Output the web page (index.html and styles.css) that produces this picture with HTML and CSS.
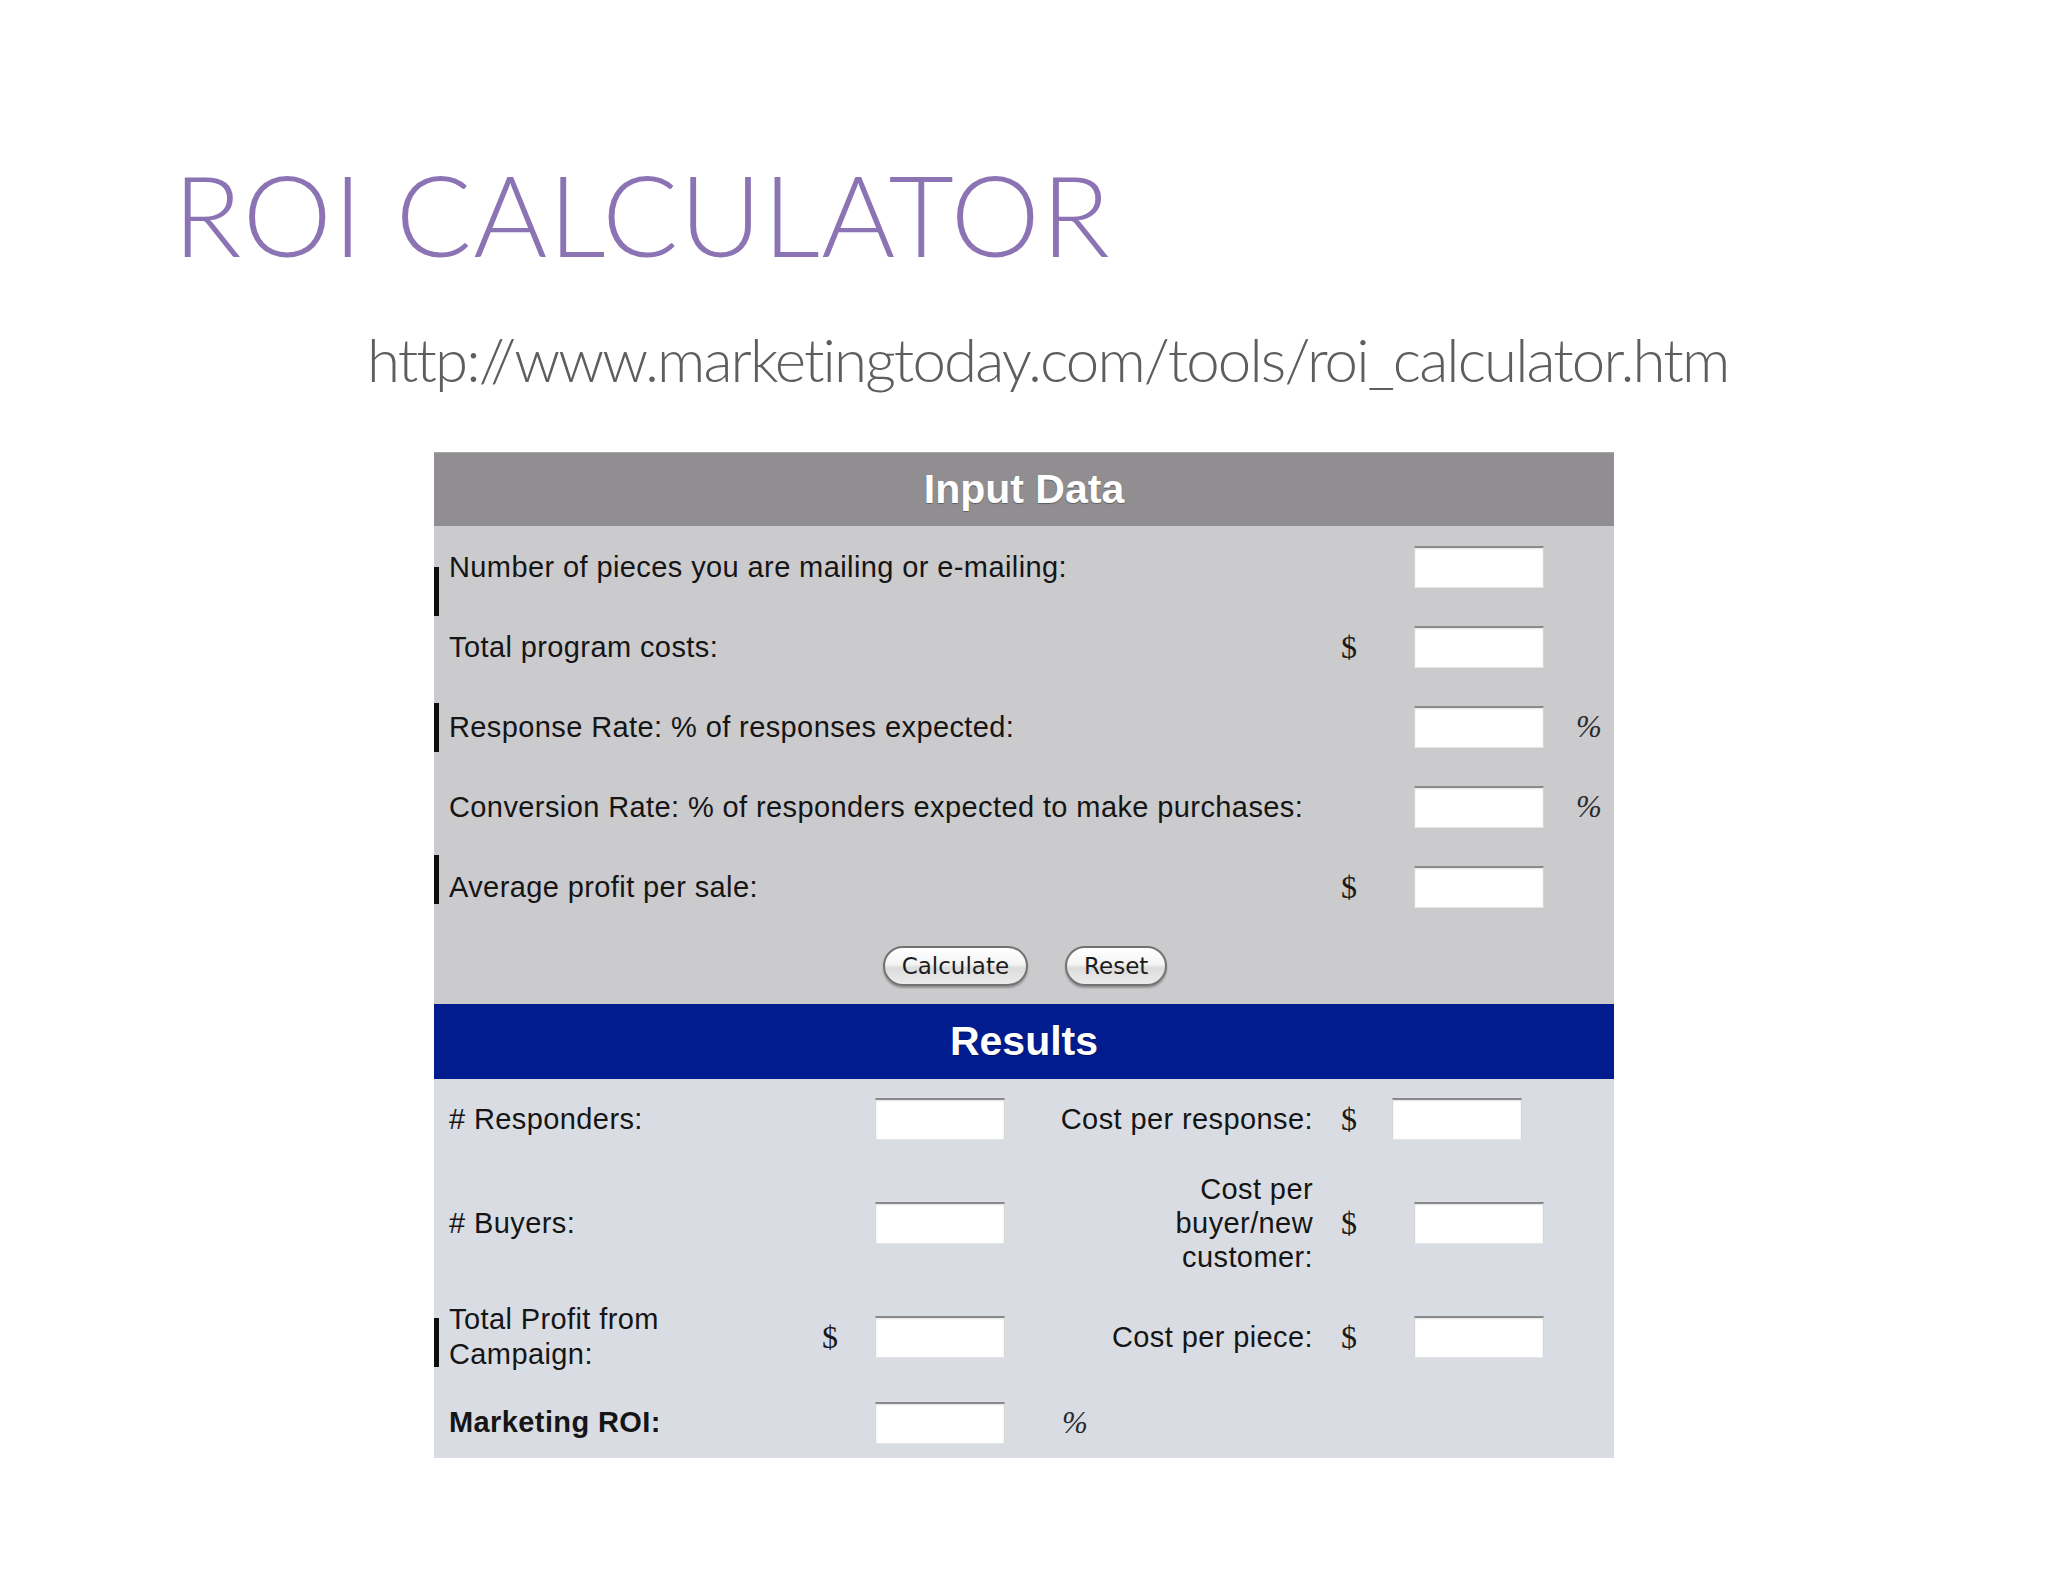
FILE: index.html
```html
<!DOCTYPE html>
<html lang="en">
<head>
<meta charset="utf-8">
<title>ROI Calculator</title>
<link rel="stylesheet" href="styles.css">
</head>
<body>
<div class="slide">
  <h1 class="title">ROI CALCULATOR</h1>
  <p class="url">http://www.marketingtoday.com/tools/roi_calculator.htm</p>

  <div class="calc">
    <div class="band band-input">Input Data</div>
    <div class="inputs">
      <div class="irow mark mark-1">
        <span class="lbl">Number of pieces you are mailing or e-mailing:</span>
        <span class="sym"></span>
        <span class="cell"><span class="box"></span></span>
        <span class="pct"></span>
      </div>
      <div class="irow">
        <span class="lbl">Total program costs:</span>
        <span class="sym">$</span>
        <span class="cell"><span class="box"></span></span>
        <span class="pct"></span>
      </div>
      <div class="irow mark mark-3">
        <span class="lbl">Response Rate: % of responses expected:</span>
        <span class="sym"></span>
        <span class="cell"><span class="box"></span></span>
        <span class="pct">%</span>
      </div>
      <div class="irow">
        <span class="lbl">Conversion Rate: % of responders expected to make purchases:</span>
        <span class="sym"></span>
        <span class="cell"><span class="box"></span></span>
        <span class="pct">%</span>
      </div>
      <div class="irow mark mark-5">
        <span class="lbl">Average profit per sale:</span>
        <span class="sym">$</span>
        <span class="cell"><span class="box"></span></span>
        <span class="pct"></span>
      </div>
      <div class="buttons">
        <button class="btn" type="button">Calculate</button>
        <button class="btn" type="button">Reset</button>
      </div>
    </div>

    <div class="band band-results">Results</div>
    <div class="results">
      <span class="rlbl">#&nbsp;Responders:</span>
      <span class="rsym"></span>
      <span class="rcell"><span class="box"></span></span>
      <span class="rlbl-right">Cost per response:</span>
      <span class="rsym">$</span>
      <span class="rcell-right"><span class="box box-shift"></span></span>

      <span class="rlbl">#&nbsp;Buyers:</span>
      <span class="rsym"></span>
      <span class="rcell"><span class="box"></span></span>
      <span class="rlbl-right"><span class="wrap-narrow">Cost per buyer/new customer:</span></span>
      <span class="rsym">$</span>
      <span class="rcell-right"><span class="box"></span></span>

      <span class="rlbl rmark"><span class="wrap-mid">Total Profit from Campaign:</span></span>
      <span class="rsym">$</span>
      <span class="rcell"><span class="box"></span></span>
      <span class="rlbl-right">Cost per piece:</span>
      <span class="rsym">$</span>
      <span class="rcell-right"><span class="box"></span></span>

      <span class="rlbl strong">Marketing ROI:</span>
      <span class="rsym"></span>
      <span class="rcell"><span class="box"></span></span>
      <span class="rpct">%</span>
      <span class="rsym"></span>
      <span class="rcell-right"></span>
    </div>
  </div>
</div>
</body>
</html>
```

FILE: styles.css
```css
html, body {
  margin: 0;
  padding: 0;
  background: #ffffff;
}

.slide {
  width: 2048px;
  height: 1582px;
  overflow: hidden;
  box-sizing: border-box;
  padding-top: 157px;
}

.title {
  margin: 0 0 0 173px;
  font-family: "Lato", "Open Sans", sans-serif;
  font-weight: 300;
  font-size: 113px;
  line-height: 113px;
  color: #8c74b4;
  letter-spacing: 1.2px;
  white-space: nowrap;
}

.url {
  margin: 59px 0 0 367px;
  font-family: "Lato", "Open Sans", sans-serif;
  font-weight: 300;
  font-size: 60px;
  line-height: 60px;
  color: #5e5e60;
  letter-spacing: -1.9px;
  white-space: nowrap;
}

.calc {
  margin: 63px 0 0 434px;
  width: 1180px;
  font-family: "Liberation Sans", Arial, sans-serif;
  color: #151515;
}

.band {
  height: 74px;
  display: flex;
  align-items: center;
  justify-content: center;
  font-family: "Liberation Sans", Arial, sans-serif;
  font-weight: bold;
  font-size: 41px;
  color: #ffffff;
  text-shadow: 0 1px 1px rgba(0, 0, 0, 0.35);
}

.band-input {
  background: #908e91;
  border-top: 1px solid #a9a8aa;
  height: 73px;
}

.band-results {
  background: #011c8e;
  height: 75px;
}

.inputs {
  background: #cbcacd;
  padding-top: 1px;
}

.irow {
  position: relative;
  height: 80px;
  box-sizing: border-box;
  padding-left: 15px;
  display: grid;
  grid-template-columns: 1fr 42px 174px 70px;
  align-items: center;
  font-size: 29px;
  letter-spacing: 0.4px;
}

.mark::before {
  content: "";
  position: absolute;
  left: 0;
  width: 5px;
  height: 49px;
  background: #0d0d0d;
}

.mark-1::before { top: 40px; }
.mark-3::before { top: 16px; }
.mark-5::before { top: 8px; }

.lbl {
  white-space: nowrap;
}

.sym,
.rsym {
  font-family: "Liberation Serif", "Times New Roman", serif;
  font-size: 32px;
  text-align: center;
  color: #1a1a1a;
  letter-spacing: 0;
}

.cell {
  display: flex;
  justify-content: flex-end;
}

.box {
  display: block;
  width: 130px;
  height: 42px;
  box-sizing: border-box;
  background: #ffffff;
  border-top: 2px solid #8a8a8a;
  border-left: 1px solid #d6d6d6;
  border-right: 1px solid #d6d6d6;
  border-bottom: 1px solid #e4e4e4;
  box-shadow: inset 0 1px 2px rgba(0, 0, 0, 0.12);
}

.pct,
.rpct {
  font-family: "Liberation Serif", "Times New Roman", serif;
  font-style: italic;
  font-size: 31px;
  color: #2a2a2a;
  letter-spacing: 0;
}

.pct {
  padding-left: 32px;
}

.buttons {
  height: 77px;
  display: flex;
  align-items: center;
  justify-content: center;
  gap: 37px;
  padding-left: 2px;
}

.btn {
  height: 40px;
  padding: 0 17px;
  border: 2px solid #727272;
  border-radius: 20px;
  background: linear-gradient(#ffffff 0%, #f4f4f4 45%, #dcdcdc 55%, #ececec 100%);
  box-shadow: 0 2px 2px rgba(0, 0, 0, 0.28);
  font-family: "DejaVu Sans", "Liberation Sans", sans-serif;
  font-size: 23px;
  color: #1c1c1c;
  line-height: 34px;
}

.results {
  background: #d9dde3;
  padding-left: 15px;
  display: grid;
  grid-template-columns: 351px 60px 145px 308px 72px 1fr;
  grid-template-rows: 80px 128px 100px 71px;
  font-size: 29px;
  letter-spacing: 0.4px;
}

.rlbl,
.rlbl-right,
.rsym,
.rcell,
.rcell-right,
.rpct {
  display: flex;
  align-items: center;
}

.rlbl {
  position: relative;
}

.rsym {
  justify-content: center;
}

.rcell {
  justify-content: flex-end;
}

.rlbl-right {
  justify-content: flex-end;
  text-align: right;
  white-space: nowrap;
}

.rcell-right .box {
  margin-left: 29px;
}

.rcell-right .box-shift {
  margin-left: 7px;
}

.wrap-narrow {
  display: block;
  width: 142px;
  white-space: normal;
  line-height: 34px;
}

.wrap-mid {
  display: block;
  width: 235px;
  line-height: 35px;
}

.rmark::before {
  content: "";
  position: absolute;
  left: -15px;
  top: 31px;
  width: 5px;
  height: 49px;
  background: #0d0d0d;
}

.strong {
  font-weight: bold;
}

.rpct {
  padding-left: 57px;
}
```
